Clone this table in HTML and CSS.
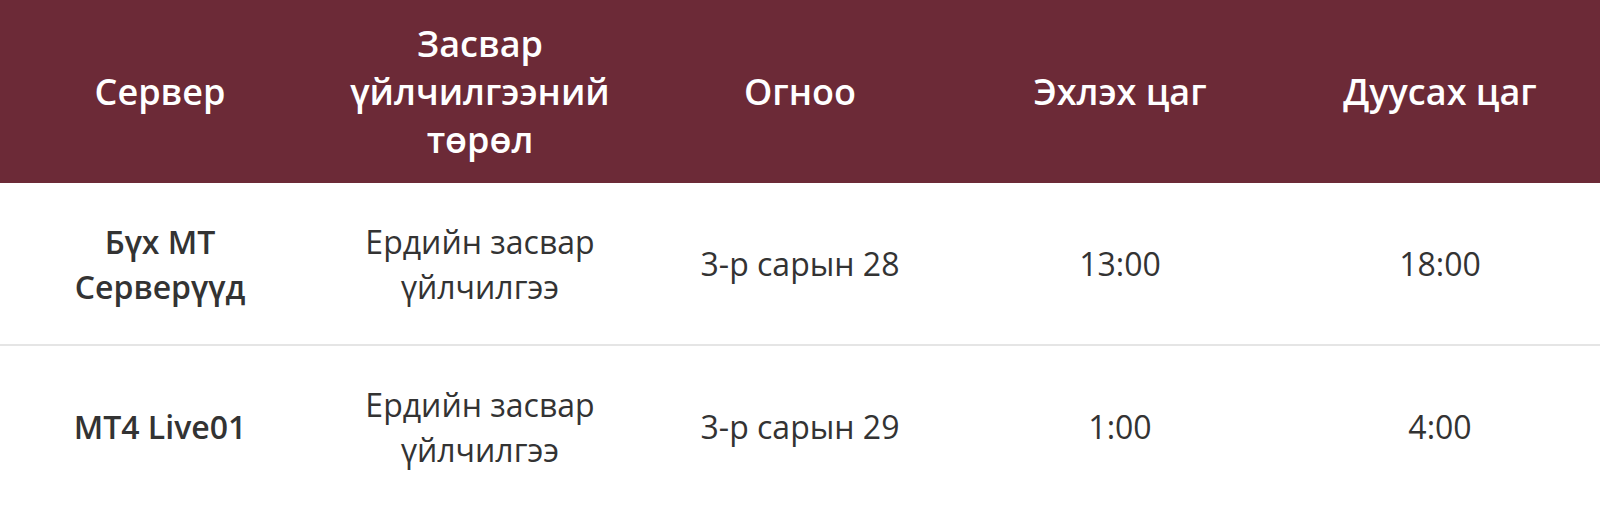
FILE: index.html
```html
<!DOCTYPE html>
<html lang="mn">
<head>
<meta charset="utf-8">
<title>Засвар үйлчилгээ</title>
<link rel="stylesheet" href="styles.css">
</head>
<body>
<div class="table">
  <div class="row head">
    <div class="cell">Сервер</div>
    <div class="cell">Засвар үйлчилгээний төрөл</div>
    <div class="cell">Огноо</div>
    <div class="cell">Эхлэх цаг</div>
    <div class="cell">Дуусах цаг</div>
  </div>
  <div class="row body">
    <div class="cell strong">Бүх МТ Серверүүд</div>
    <div class="cell">Ердийн засвар үйлчилгээ</div>
    <div class="cell">3-р сарын 28</div>
    <div class="cell">13:00</div>
    <div class="cell">18:00</div>
  </div>
  <div class="row body">
    <div class="cell strong">MT4 Live01</div>
    <div class="cell">Ердийн засвар үйлчилгээ</div>
    <div class="cell">3-р сарын 29</div>
    <div class="cell">1:00</div>
    <div class="cell">4:00</div>
  </div>
</div>
</body>
</html>
```
FILE: styles.css
```css
html, body {
  margin: 0;
  padding: 0;
  background: #ffffff;
}
body {
  font-family: "Open Sans", "Noto Sans", sans-serif;
  color: #333333;
}
.table {
  width: 1600px;
}
.row {
  display: grid;
  grid-template-columns: repeat(5, minmax(0, 1fr));
}
.cell {
  display: flex;
  align-items: center;
  justify-content: center;
  text-align: center;
  padding: 0 30px;
}
.head {
  background: #6c2a37;
  color: #ffffff;
  height: 183px;
  font-size: 36px;
  font-weight: 600;
  line-height: 48px;
}
.head .cell {
  padding: 0 20px;
}
.body {
  height: 161px;
  font-size: 32px;
  line-height: 45px;
}
.body + .body {
  border-top: 2px solid #e5e5e5;
}
.strong {
  font-weight: 600;
}
```
